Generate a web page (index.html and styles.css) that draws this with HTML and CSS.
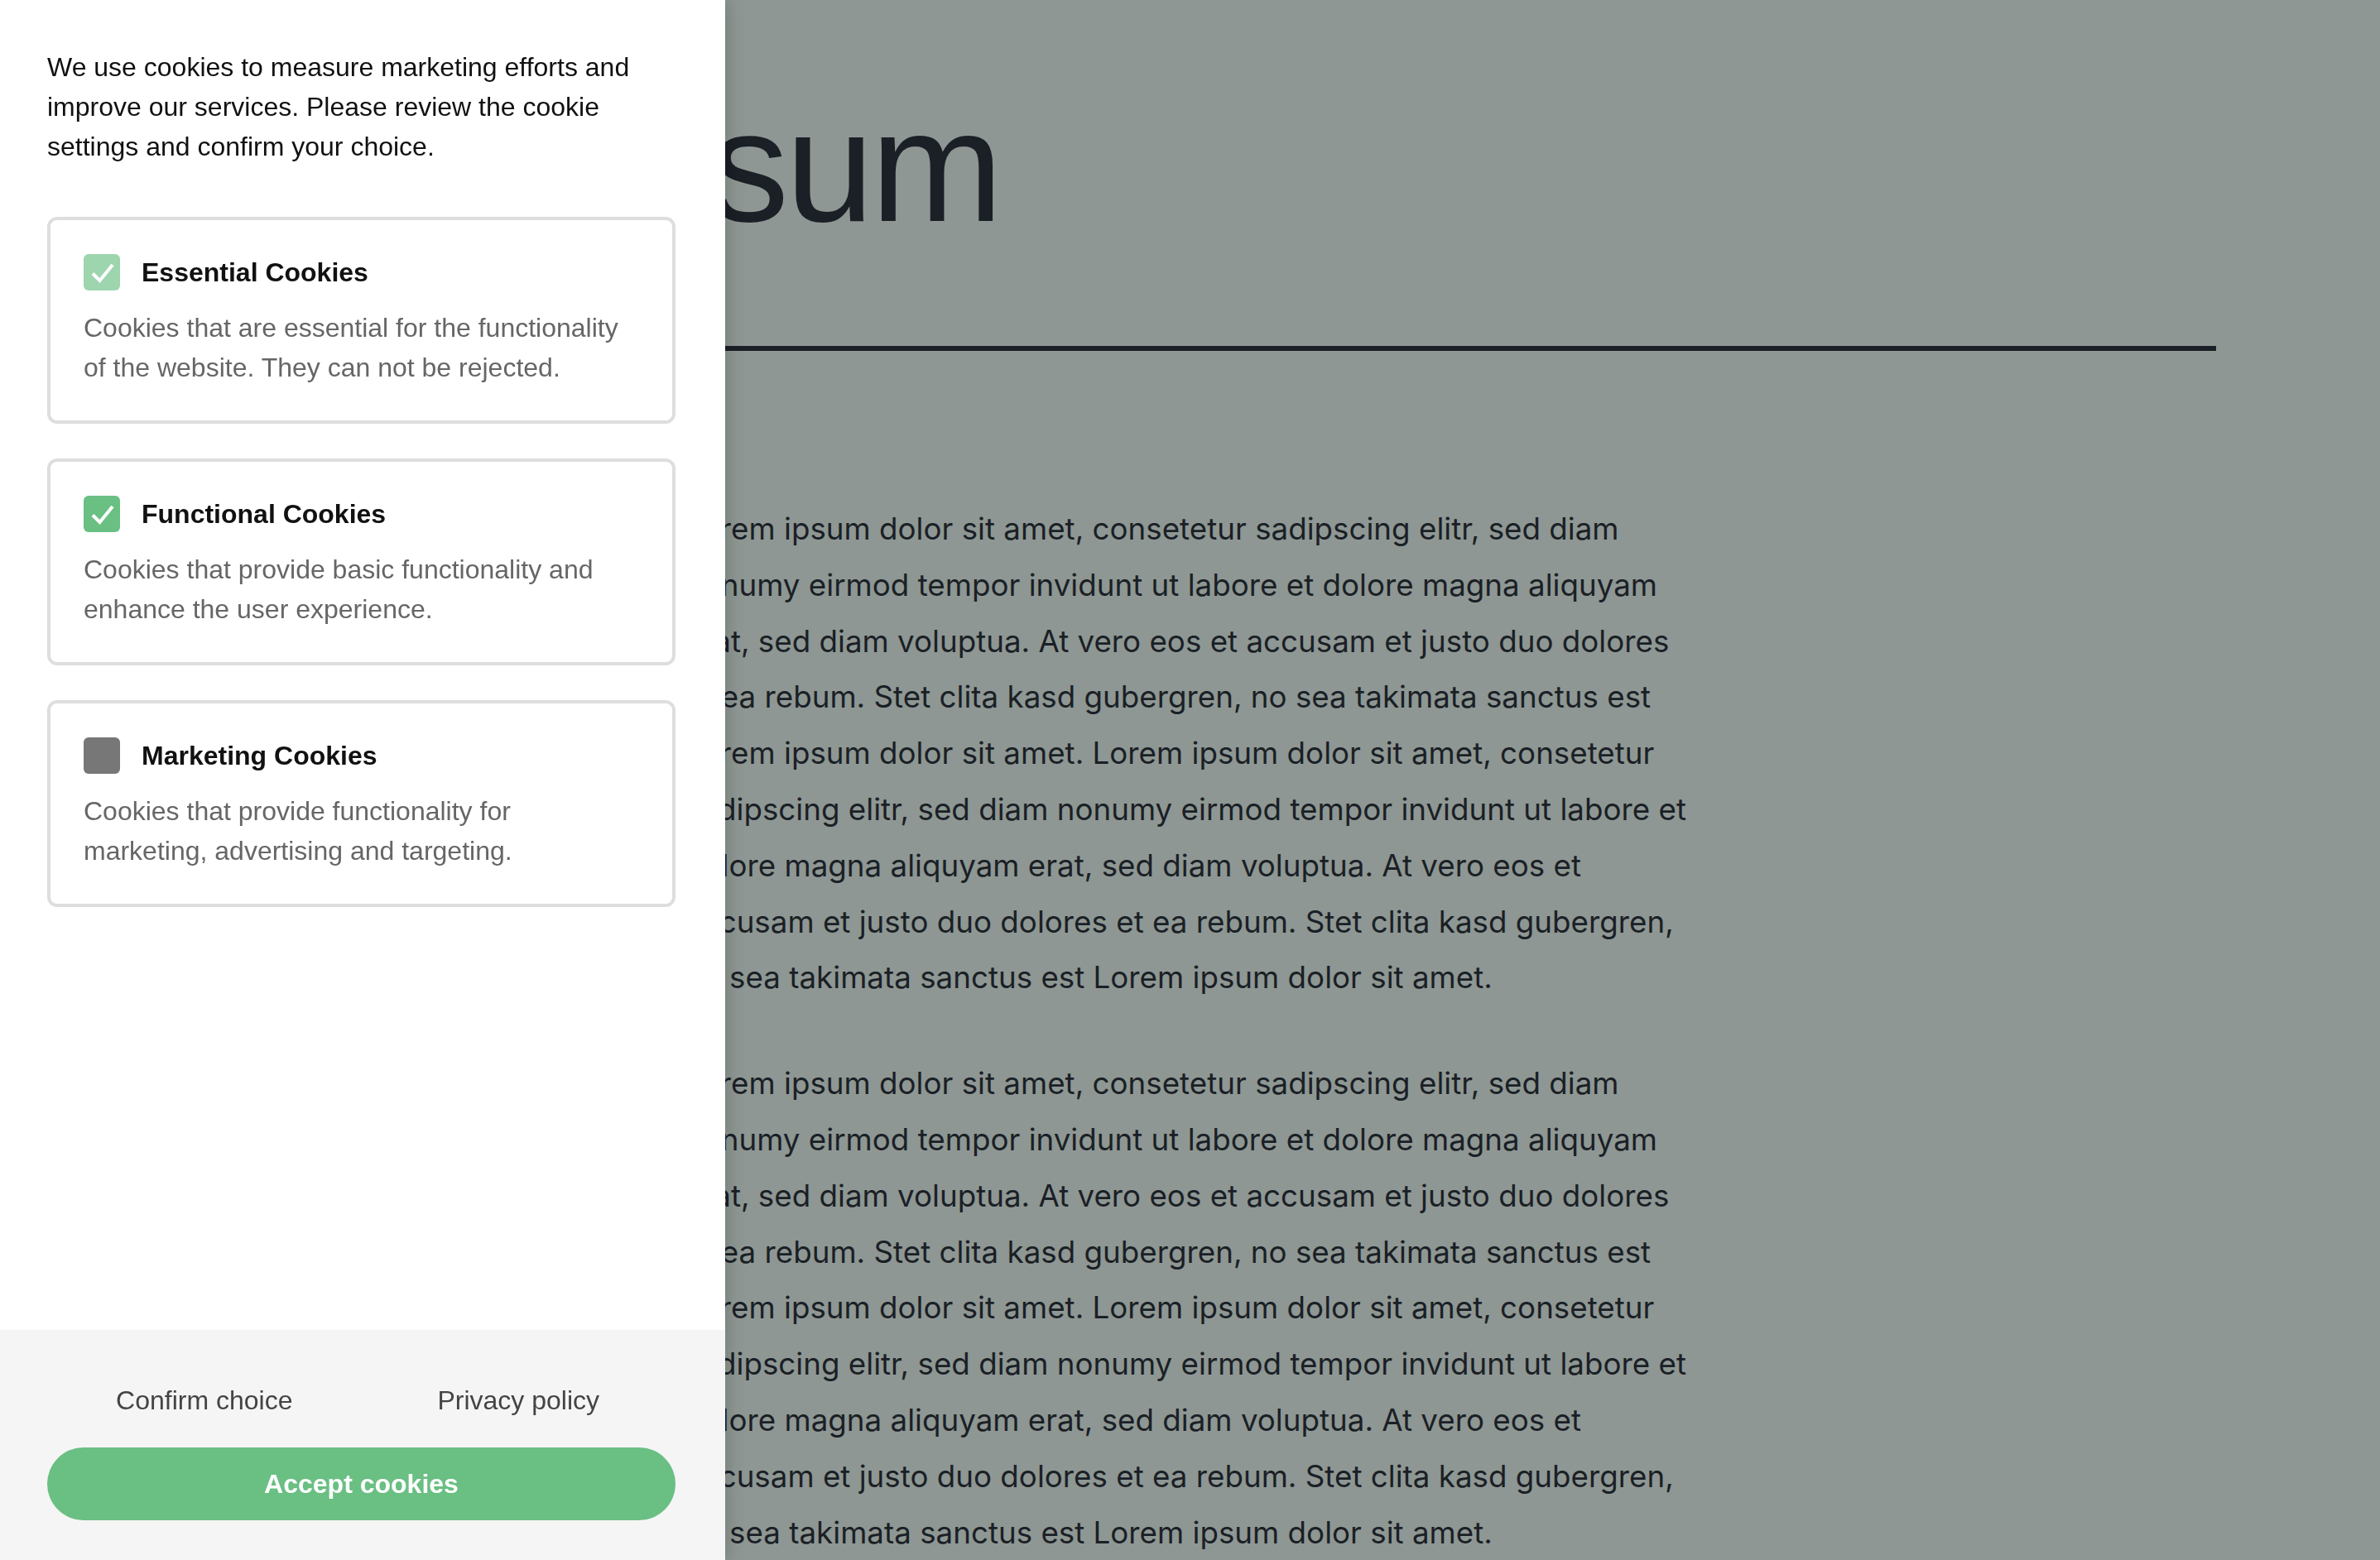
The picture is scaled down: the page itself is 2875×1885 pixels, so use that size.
FILE: index.html
```html
<!DOCTYPE html>
<html lang="en">
<head>
<meta charset="utf-8">
<title>Lorem ipsum</title>
<link rel="stylesheet" href="styles.css">
</head>
<body>
<main class="page">
  <div class="page-inner">
    <h1 class="page-title">Lorem ipsum</h1>
    <hr class="page-rule">
    <div class="page-body">
      <p>Lorem ipsum dolor sit amet, consetetur sadipscing elitr, sed diam nonumy eirmod tempor invidunt ut labore et dolore magna aliquyam erat, sed diam voluptua. At vero eos et accusam et justo duo dolores et ea rebum. Stet clita kasd gubergren, no sea takimata sanctus est Lorem ipsum dolor sit amet. Lorem ipsum dolor sit amet, consetetur sadipscing elitr, sed diam nonumy eirmod tempor invidunt ut labore et dolore magna aliquyam erat, sed diam voluptua. At vero eos et accusam et justo duo dolores et ea rebum. Stet clita kasd gubergren, no sea takimata sanctus est Lorem ipsum dolor sit amet.</p>
      <p>Lorem ipsum dolor sit amet, consetetur sadipscing elitr, sed diam nonumy eirmod tempor invidunt ut labore et dolore magna aliquyam erat, sed diam voluptua. At vero eos et accusam et justo duo dolores et ea rebum. Stet clita kasd gubergren, no sea takimata sanctus est Lorem ipsum dolor sit amet. Lorem ipsum dolor sit amet, consetetur sadipscing elitr, sed diam nonumy eirmod tempor invidunt ut labore et dolore magna aliquyam erat, sed diam voluptua. At vero eos et accusam et justo duo dolores et ea rebum. Stet clita kasd gubergren, no sea takimata sanctus est Lorem ipsum dolor sit amet.</p>
    </div>
  </div>
</main>

<aside class="consent">
  <div class="consent-main">
    <p class="consent-intro">We use cookies to measure marketing efforts and improve our services. Please review the cookie settings and confirm your choice.</p>

    <div class="option">
      <div class="option-head">
        <span class="checkbox checkbox--on checkbox--disabled">
          <svg viewBox="0 0 44 44" width="44" height="44"><polyline points="11,23.5 19.5,32 35,13" fill="none" stroke="#fff" stroke-width="4"/></svg>
        </span>
        <span class="option-title">Essential Cookies</span>
      </div>
      <p class="option-desc">Cookies that are essential for the functionality of the website. They can not be rejected.</p>
    </div>

    <div class="option">
      <div class="option-head">
        <span class="checkbox checkbox--on">
          <svg viewBox="0 0 44 44" width="44" height="44"><polyline points="11,23.5 19.5,32 35,13" fill="none" stroke="#fff" stroke-width="4"/></svg>
        </span>
        <span class="option-title">Functional Cookies</span>
      </div>
      <p class="option-desc">Cookies that provide basic functionality and enhance the user experience.</p>
    </div>

    <div class="option">
      <div class="option-head">
        <span class="checkbox checkbox--off"></span>
        <span class="option-title">Marketing Cookies</span>
      </div>
      <p class="option-desc">Cookies that provide functionality for marketing, advertising and targeting.</p>
    </div>
  </div>

  <div class="consent-footer">
    <div class="consent-links">
      <a class="consent-link" href="#">Confirm choice</a>
      <a class="consent-link" href="#">Privacy policy</a>
    </div>
    <button class="consent-accept" type="button">Accept cookies</button>
  </div>
</aside>
</body>
</html>
```

FILE: styles.css
```css
html, body {
  margin: 0;
  padding: 0;
}

body {
  background: #8e9793;
  color: #1b1f26;
  font-family: Inter, "Liberation Sans", sans-serif;
  height: 1885px;
  overflow: hidden;
}

.page-inner {
  margin-left: 142px;
  width: 2535px;
  padding-top: 105px;
}

.page-title {
  margin: 0;
  font-family: "Liberation Sans", Arial, sans-serif;
  font-weight: 400;
  font-size: 192px;
  line-height: 192px;
  letter-spacing: -4px;
  color: #1b1f26;
  white-space: nowrap;
}

.page-rule {
  margin: 121px 0 0;
  border: 0;
  height: 6px;
  background: #1b1f26;
}

.page-body {
  margin: 181px 0 0 685px;
  max-width: 1220px;
}

.page-body p {
  margin: 0 0 60px;
  font-size: 36.75px;
  line-height: 67.8px;
  color: #1b1f26;
}

/* consent panel */
.consent {
  position: fixed;
  top: 0;
  left: 0;
  bottom: 0;
  width: 876px;
  background: #fff;
  display: flex;
  flex-direction: column;
  font-family: "Liberation Sans", Arial, sans-serif;
  box-shadow: 0 0 22px rgba(0, 0, 0, 0.22);
}

.consent-main {
  flex: 1;
  padding: 57px 60px 0 57px;
}

.consent-intro {
  margin: 0 0 61px;
  font-size: 32px;
  line-height: 48px;
  color: #111;
}

.option {
  border: 4px solid #dedede;
  border-radius: 12px;
  padding: 40px;
  margin-bottom: 42px;
}

.option-head {
  display: flex;
  align-items: center;
  gap: 26px;
  height: 46px;
}

.checkbox {
  flex: none;
  width: 44px;
  height: 44px;
  border-radius: 6px;
  display: block;
}

.checkbox svg {
  display: block;
}

.checkbox--on {
  background: #6abf83;
}

.checkbox--disabled {
  opacity: 0.65;
}

.checkbox--off {
  background: #777;
}

.option-title {
  font-size: 32px;
  font-weight: 700;
  line-height: 48px;
  color: #111;
}

.option-desc {
  margin: 20px 0 0;
  font-size: 32px;
  line-height: 48px;
  color: #666;
}

.consent-footer {
  background: #f5f5f5;
  padding: 61px 60px 48px 57px;
}

.consent-links {
  display: grid;
  grid-template-columns: 1fr 1fr;
  margin-bottom: 33px;
}

.consent-link {
  text-align: center;
  font-size: 32px;
  line-height: 48px;
  color: #444;
  text-decoration: none;
}

.consent-accept {
  display: block;
  width: 100%;
  height: 88px;
  border: 0;
  border-radius: 44px;
  background: #6abf83;
  color: #fff;
  font-family: "Liberation Sans", Arial, sans-serif;
  font-size: 32px;
  font-weight: 700;
  padding: 0;
}
```
